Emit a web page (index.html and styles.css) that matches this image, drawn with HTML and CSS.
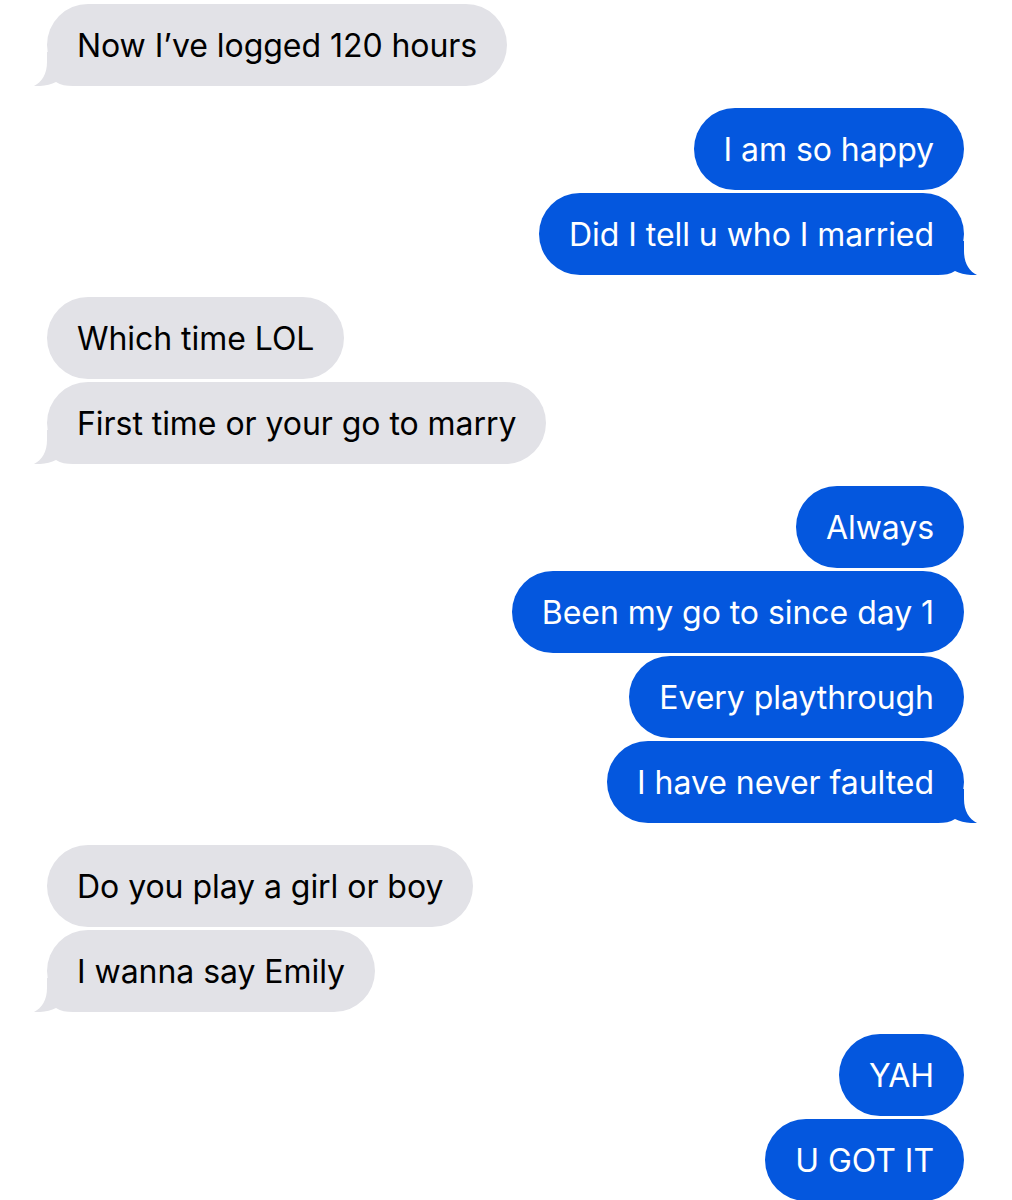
FILE: index.html
```html
<!DOCTYPE html>
<html lang="en">
<head>
    <meta charset="UTF-8">
    <meta name="viewport" content="width=device-width, initial-scale=1.0">
    <title>Messages</title>
    <link rel="stylesheet" href="styles.css">
</head>
<body>

    <div class="chat">

        <div class="group them">
            <div class="msg last">Now I’ve logged 120 hours
                <svg class="tail" viewBox="0 0 60 34"><path d="M14 0 L14 10 C14 22 9 30 1 34 C9 34.5 17 33 23 30 C28 33 33 34 40 34 L60 34 L60 0 Z"/></svg>
            </div>
        </div>

        <div class="group me">
            <div class="msg">I am so happy</div>
            <div class="msg last">Did I tell u who I married
                <svg class="tail" viewBox="0 0 60 34"><path d="M14 0 L14 10 C14 22 9 30 1 34 C9 34.5 17 33 23 30 C28 33 33 34 40 34 L60 34 L60 0 Z"/></svg>
            </div>
        </div>

        <div class="group them">
            <div class="msg">Which time LOL</div>
            <div class="msg last">First time or your go to marry
                <svg class="tail" viewBox="0 0 60 34"><path d="M14 0 L14 10 C14 22 9 30 1 34 C9 34.5 17 33 23 30 C28 33 33 34 40 34 L60 34 L60 0 Z"/></svg>
            </div>
        </div>

        <div class="group me">
            <div class="msg">Always</div>
            <div class="msg">Been my go to since day 1</div>
            <div class="msg">Every playthrough</div>
            <div class="msg last">I have never faulted
                <svg class="tail" viewBox="0 0 60 34"><path d="M14 0 L14 10 C14 22 9 30 1 34 C9 34.5 17 33 23 30 C28 33 33 34 40 34 L60 34 L60 0 Z"/></svg>
            </div>
        </div>

        <div class="group them">
            <div class="msg">Do you play a girl or boy</div>
            <div class="msg last">I wanna say Emily
                <svg class="tail" viewBox="0 0 60 34"><path d="M14 0 L14 10 C14 22 9 30 1 34 C9 34.5 17 33 23 30 C28 33 33 34 40 34 L60 34 L60 0 Z"/></svg>
            </div>
        </div>

        <div class="group me">
            <div class="msg">YAH</div>
            <div class="msg">U GOT IT</div>
        </div>

    </div>

</body>
</html>
```

FILE: styles.css
```css
body {
    font-family: Inter, "Noto Sans", Arial, sans-serif;
    margin: 0;
    padding: 0;
    background-color: #fff;
}

.chat {
    display: flex;
    flex-direction: column;
    gap: 22px;
    padding: 4px 48px 0 47px;
}

.group {
    display: flex;
    flex-direction: column;
    gap: 3px;
}

.msg {
    position: relative;
    z-index: 0;
    height: 82px;
    display: flex;
    align-items: center;
    padding: 0 30px;
    border-radius: 41px;
    font-size: 32px;
    letter-spacing: -0.05px;
    white-space: nowrap;
}

.them .msg {
    align-self: flex-start;
    background-color: #e2e2e7;
    color: #000;
}

.me .msg {
    align-self: flex-end;
    background-color: #0457de;
    color: #fff;
}

/* little tail under the last bubble of a group, kept behind the text */
.tail {
    position: absolute;
    z-index: -1;
    bottom: 0;
    left: -14px;
    width: 60px;
    height: 34px;
}

.them .tail {
    fill: #e2e2e7;
}

.me .tail {
    left: auto;
    right: -14px;
    fill: #0457de;
    transform: scaleX(-1);
}
```
